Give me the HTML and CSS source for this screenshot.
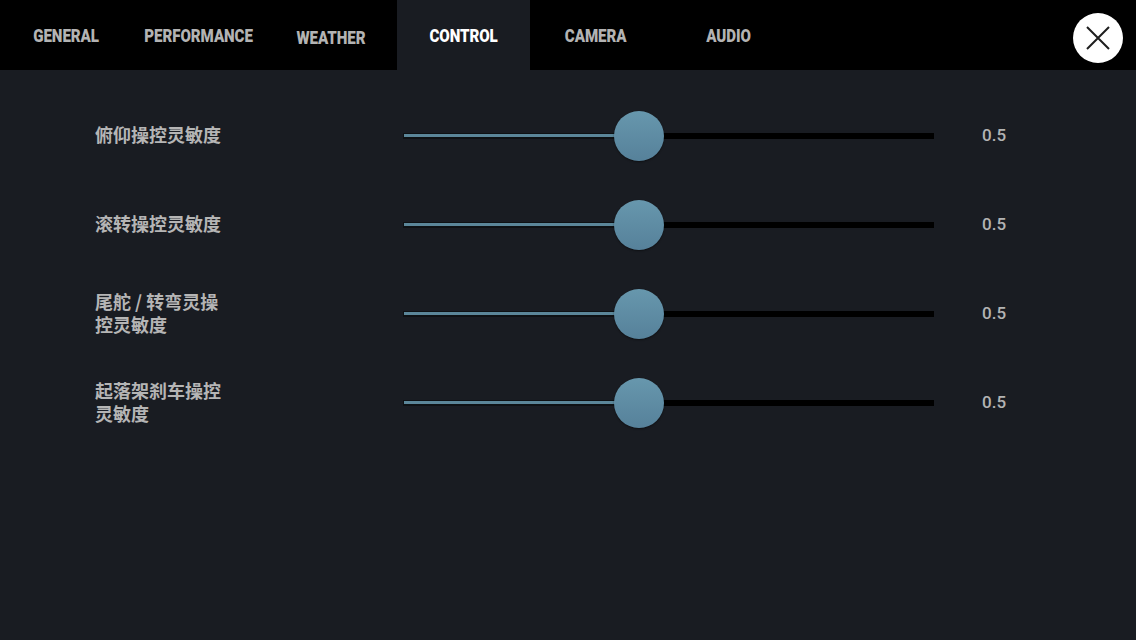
FILE: index.html
```html
<!DOCTYPE html>
<html lang="zh">
<head>
<meta charset="utf-8">
<title>Settings - Control</title>
<link rel="stylesheet" href="styles.css">
</head>
<body>
<header class="topbar">
  <nav class="tabs">
    <div class="tab"><span class="tab-label">GENERAL</span></div>
    <div class="tab"><span class="tab-label">PERFORMANCE</span></div>
    <div class="tab"><span class="tab-label tab-low">WEATHER</span></div>
    <div class="tab active"><span class="tab-label">CONTROL</span></div>
    <div class="tab"><span class="tab-label">CAMERA</span></div>
    <div class="tab"><span class="tab-label">AUDIO</span></div>
  </nav>
  <button class="close" aria-label="close">
    <svg width="24" height="24" viewBox="0 0 24 24"><path d="M1 1 L23 23 M23 1 L1 23" stroke="#1e1e1e" stroke-width="2" fill="none"/></svg>
  </button>
</header>
<main class="content">
  <div class="row">
    <div class="label"><div class="line">俯仰操控灵敏度</div></div>
    <div class="slider"><div class="track"><div class="fill" style="width:44.4%"></div><div class="thumb" style="left:44.4%"></div></div></div>
    <div class="value">0.5</div>
  </div>
  <div class="row">
    <div class="label"><div class="line">滚转操控灵敏度</div></div>
    <div class="slider"><div class="track"><div class="fill" style="width:44.4%"></div><div class="thumb" style="left:44.4%"></div></div></div>
    <div class="value">0.5</div>
  </div>
  <div class="row">
    <div class="label"><div class="line">尾舵 / 转弯灵操</div><div class="line">控灵敏度</div></div>
    <div class="slider"><div class="track"><div class="fill" style="width:44.4%"></div><div class="thumb" style="left:44.4%"></div></div></div>
    <div class="value">0.5</div>
  </div>
  <div class="row">
    <div class="label"><div class="line">起落架刹车操控</div><div class="line">灵敏度</div></div>
    <div class="slider"><div class="track"><div class="fill" style="width:44.4%"></div><div class="thumb" style="left:44.4%"></div></div></div>
    <div class="value">0.5</div>
  </div>
</main>
</body>
</html>
```
FILE: styles.css
```css
* { box-sizing: border-box; }
html, body {
  margin: 0;
  padding: 0;
  width: 1136px;
  height: 640px;
  overflow: hidden;
  background: #191c22;
  font-family: Roboto, "Noto Sans", "Noto Sans CJK SC", sans-serif;
}
.topbar {
  height: 70px;
  background: #000;
  display: flex;
  align-items: stretch;
  justify-content: space-between;
}
.tabs {
  display: flex;
}
.tab {
  width: 132.4px;
  display: flex;
  align-items: center;
  justify-content: center;
  padding-top: 1px;
}
.tab.active {
  background: #191c22;
}
.tab-label {
  display: inline-block;
  font-family: Roboto, "Liberation Sans", sans-serif;
  font-weight: 900;
  font-size: 18px;
  color: #b3b3b3;
  transform: scaleX(0.84);
  letter-spacing: -0.1px;
}
.tab-low { position: relative; top: 2px; }
.tab.active .tab-label { color: #fff; }
.close {
  width: 50px;
  height: 50px;
  margin: 13px 13px 0 0;
  border-radius: 50%;
  border: none;
  background: #fff;
  padding: 0;
  display: flex;
  align-items: center;
  justify-content: center;
}
.content {
  padding-top: 21px;
  display: flex;
  flex-direction: column;
}
.row {
  height: 89px;
  display: flex;
  align-items: center;
}
.label {
  width: 403px;
  padding-left: 95px;
  margin-top: -2px;
  font-family: "Noto Sans CJK SC", sans-serif;
  font-weight: 700;
  font-size: 18px;
  color: #b5b5b5;
}
.line {
  height: 23px;
  line-height: 23px;
}
.slider {
  width: 531px;
}
.track {
  position: relative;
  height: 6px;
  background: #000;
}
.fill {
  height: 6px;
  border-top: 1px solid #0e1114;
  border-bottom: 2px solid #0e1114;
  border-left: 1px solid #0e1114;
  background: #5b8699;
}
.thumb {
  position: absolute;
  top: 50%;
  width: 50px;
  height: 50px;
  margin: -25px 0 0 -25px;
  border-radius: 50%;
  background: linear-gradient(#6797ad, #56819a);
  box-shadow: 0 1px 2px rgba(0,0,0,0.45);
}
.value {
  margin-left: 48px;
  margin-top: -1px;
  font-family: Roboto, sans-serif;
  font-weight: 500;
  font-size: 17px;
  color: #b3b3b3;
}
```
